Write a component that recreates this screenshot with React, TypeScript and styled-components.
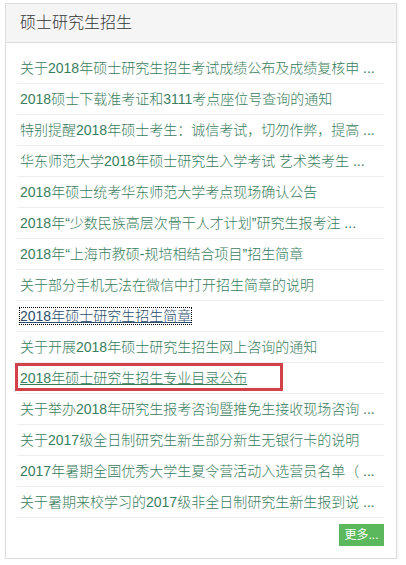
import { createGlobalStyle, styled } from 'styled-components';

const GlobalStyle = createGlobalStyle`
  body {
    margin: 0;
    background: #fff;
    font-family: "Liberation Sans", "Noto Sans CJK SC", sans-serif;
  }
`;

const Panel = styled.div`
  margin: 3px 0 0 5px;
  width: 392px;
  border: 1px solid #ddd;
  box-shadow: 1px 1px 2px rgba(0, 0, 0, 0.06);
  background: #fff;
  box-sizing: border-box;
`;

const Header = styled.h2`
  margin: 0;
  height: 39px;
  line-height: 38px;
  padding-left: 14px;
  font-size: 16px;
  font-weight: 300;
  color: #333;
  background: #f5f5f5;
  border-bottom: 1px solid #ddd;
  box-sizing: border-box;
`;

const Body = styled.div`
  padding: 10px 12px 12px 11px;
`;

const List = styled.ul`
  margin: 0;
  padding: 0;
  list-style: none;
`;

const Item = styled.li<{ $marked?: boolean }>`
  position: relative;
  height: 31px;
  line-height: 30px;
  padding: 0 3px;
  border-bottom: 1px solid #eee;
  box-sizing: border-box;
  white-space: nowrap;

  ${p =>
    p.$marked &&
    `
    &::after {
      content: '';
      position: absolute;
      left: -2px;
      top: 0;
      width: 268px;
      height: 28px;
      border: 3px solid #d2404a;
      box-sizing: border-box;
    }
  `}
`;

const Link = styled.a<{ $focused?: boolean; $underline?: boolean }>`
  font-size: 14px;
  font-weight: 300;
  color: ${p => (p.$focused ? '#2c4d6b' : '#3a7d5c')};
  text-decoration: ${p => (p.$focused || p.$underline ? 'underline' : 'none')};
  outline: ${p => (p.$focused ? '1px dotted #000' : 'none')};
  cursor: pointer;
`;

const Footer = styled.div`
  display: flex;
  justify-content: flex-end;
  padding-top: 6px;
`;

const MoreButton = styled.button`
  width: 45px;
  height: 22px;
  padding: 0;
  border: 0;
  background: #5cb85c;
  color: #fff;
  font-family: inherit;
  font-size: 12px;
  line-height: 22px;
  cursor: pointer;
`;

const news = [
  { title: '关于2018年硕士研究生招生考试成绩公布及成绩复核申 ...' },
  { title: '2018硕士下载准考证和3111考点座位号查询的通知' },
  { title: '特别提醒2018年硕士考生：诚信考试，切勿作弊，提高 ...' },
  { title: '华东师范大学2018年硕士研究生入学考试 艺术类考生 ...' },
  { title: '2018年硕士统考华东师范大学考点现场确认公告' },
  { title: '2018年“少数民族高层次骨干人才计划”研究生报考注 ...' },
  { title: '2018年“上海市教硕-规培相结合项目”招生简章' },
  { title: '关于部分手机无法在微信中打开招生简章的说明' },
  { title: '2018年硕士研究生招生简章', focused: true },
  { title: '关于开展2018年硕士研究生招生网上咨询的通知' },
  { title: '2018年硕士研究生招生专业目录公布', marked: true },
  { title: '关于举办2018年研究生报考咨询暨推免生接收现场咨询 ...' },
  { title: '关于2017级全日制研究生新生部分新生无银行卡的说明' },
  { title: '2017年暑期全国优秀大学生夏令营活动入选营员名单（ ...' },
  { title: '关于暑期来校学习的2017级非全日制研究生新生报到说 ...' },
];

export default function App() {
  return (
    <>
      <GlobalStyle />
      <Panel>
        <Header>硕士研究生招生</Header>
        <Body>
          <List>
            {news.map((n, i) => (
              <Item key={i} $marked={n.marked}>
                <Link $focused={n.focused} $underline={n.marked}>
                  {n.title}
                </Link>
              </Item>
            ))}
          </List>
          <Footer>
            <MoreButton>更多...</MoreButton>
          </Footer>
        </Body>
      </Panel>
    </>
  );
}
